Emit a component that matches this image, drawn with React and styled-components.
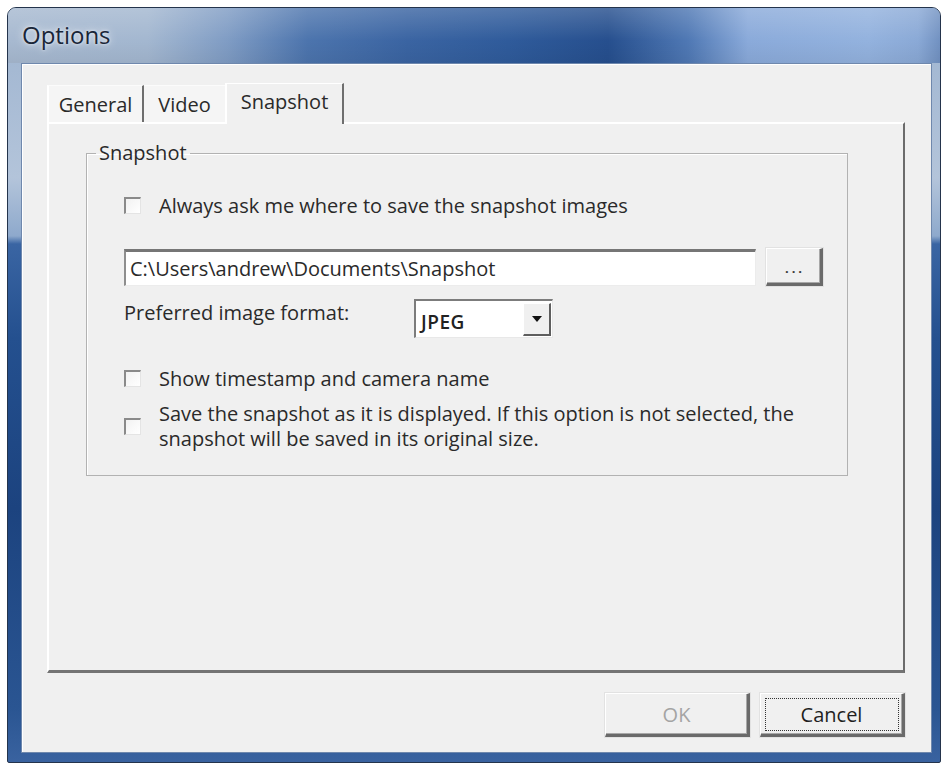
import React from "react";
import styled, { createGlobalStyle } from "styled-components";

const Global = createGlobalStyle`
  html, body { margin: 0; padding: 0; background: #ffffff; }
  body { font-family: "Open Sans", "Noto Sans", sans-serif; }
  * { box-sizing: border-box; }
`;

const Window = styled.div`
  margin: 7px 0 0 7px;
  width: 934px;
  height: 756px;
  display: flex;
  flex-direction: column;
  border: 1px solid #24344c;
  border-radius: 9px 9px 2px 2px;
  overflow: hidden;
  background: linear-gradient(
    180deg,
    #9db3cf 0px,
    #b3c4da 170px,
    #8ea9cc 228px,
    #3a65a3 236px,
    #24508f 330px,
    #1c437f 500px,
    #2a5592 700px,
    #3a63a0 756px
  );
`;

const TitleBar = styled.div`
  height: 55px;
  flex: none;
  display: flex;
  align-items: center;
  padding-left: 14px;
  background:
    linear-gradient(180deg, rgba(255,255,255,0.18) 0%, rgba(255,255,255,0) 60%, rgba(0,0,0,0.05) 100%),
    linear-gradient(
      90deg,
      #a7b9d0 0px,
      #a3b7d0 140px,
      #7f9cc4 220px,
      #4c74ad 300px,
      #3a64a2 400px,
      #2f5b9b 500px,
      #264f8e 600px,
      #4f78b4 680px,
      #8aaada 740px,
      #93b2de 860px,
      #8aa9d6 910px,
      #6f8fbf 934px
    );
`;

const Title = styled.span`
  font-family: "Open Sans", "Noto Sans", sans-serif;
  font-size: 24px;
  color: #1a2638;
  text-shadow: 0 0 8px rgba(255, 255, 255, 0.9), 0 0 3px rgba(255, 255, 255, 0.7);
  margin-top: -2px;
`;

const FrameBody = styled.div`
  flex: 1;
  display: flex;
  padding: 0 8px 9px 13px;
`;

const Client = styled.div`
  flex: 1;
  display: flex;
  flex-direction: column;
  background: #f0f0f0;
  border: 1px solid #6f88ad;
  box-shadow: inset 1px 1px 0 #ffffff;
  padding: 21px 26px 14px 25px;
`;

const TabStrip = styled.div`
  display: flex;
  align-items: flex-end;
  height: 39px;
  position: relative;
  z-index: 1;
  margin-bottom: -2px;
`;

const Tab = styled.div`
  height: ${(p) => (p.$active ? "41px" : "37px")};
  margin-bottom: ${(p) => (p.$active ? "0" : "2px")};
  width: ${(p) => p.$w}px;
  display: flex;
  align-items: center;
  justify-content: center;
  font-size: 20px;
  color: #2a2a2a;
  background: ${(p) => (p.$active ? "#f0f0f0" : "#f5f5f5")};
  border-top: 1px solid ${(p) => (p.$active ? "#ffffff" : "#fbfbfb")};
  border-left: ${(p) => (p.$first || p.$active ? "2px solid #ffffff" : "0")};
  border-right: ${(p) => (p.$sep ? "2px solid #6e6e6e" : "0")};
  padding-bottom: ${(p) => (p.$active ? "5px" : "0")};
`;

const Panel = styled.div`
  flex: none;
  height: 551px;
  background: #f0f0f0;
  border-top: 2px solid #ffffff;
  border-left: 2px solid #ffffff;
  border-right: 2px solid #6c6c6c;
  border-bottom: 3px solid #747474;
  padding: 19px 55px 0 37px;
`;

const Group = styled.fieldset`
  margin: 0;
  border: 1px solid #b2b2b2;
  box-shadow: 1px 1px 0 #ffffff inset;
  padding: 30px 24px 24px 9px;
`;

const GroupBody = styled.div`
  display: flex;
  flex-direction: column;
  padding-left: 28px;
`;

const Legend = styled.legend`
  font-size: 20px;
  line-height: 20px;
  color: #2a2a2a;
  padding: 0 3px;
  margin: 0;
`;

const CheckRow = styled.div`
  display: flex;
  align-items: center;
  gap: 18px;
  margin-top: ${(p) => p.$mt || 0}px;
`;

const Box = styled.span`
  flex: none;
  width: 17px;
  height: 17px;
  border-top: 2px solid #8a8a8a;
  border-left: 2px solid #8a8a8a;
  border-right: 1px solid #e4e4e4;
  border-bottom: 1px solid #e4e4e4;
  background: linear-gradient(135deg, #f2f2f2, #ffffff);
`;

const Label = styled.span`
  font-size: 20px;
  line-height: 25px;
  color: #2a2a2a;
`;

const PathRow = styled.div`
  display: flex;
  align-items: center;
  gap: 10px;
  margin-top: 30px;
`;

const PathInput = styled.div`
  flex: 1;
  height: 37px;
  background: #ffffff;
  border-top: 3px solid #767676;
  border-left: 2px solid #8e8e8e;
  border-right: 1px solid #ececec;
  border-bottom: 1px solid #ececec;
  display: flex;
  align-items: center;
  padding-left: 4px;
  font-size: 20px;
  color: #2a2a2a;
`;

const RaisedButton = styled.div`
  width: ${(p) => p.$w}px;
  height: ${(p) => p.$h}px;
  flex: none;
  display: flex;
  align-items: center;
  justify-content: center;
  background: #f0f0f0;
  border-top: 1px solid #ffffff;
  border-left: 1px solid #ffffff;
  border-right: 3px solid #6a6a6a;
  border-bottom: 3px solid #6a6a6a;
  box-shadow: inset -1px -1px 0 #a8a8a8, 0 0 0 1px #e2e2e2;
  color: ${(p) => (p.$disabled ? "#a4a4a4" : "#1f1f1f")};
  font-size: 20px;
  position: relative;
`;

const Dots = styled.span`
  font-size: 13px;
  font-weight: 700;
  letter-spacing: 3px;
  margin: 4px 0 0 3px;
  color: #3a3a3a;
`;

const FormatRow = styled.div`
  display: flex;
  align-items: flex-start;
  margin-top: 13px;
`;

const FormatLabel = styled.span`
  font-size: 20px;
  line-height: 25px;
  color: #2a2a2a;
  width: 290px;
  margin-top: 1px;
`;

const Select = styled.div`
  width: 139px;
  height: 39px;
  display: flex;
  align-items: center;
  background: #ffffff;
  border-top: 2px solid #7c7c7c;
  border-left: 2px solid #7c7c7c;
  border-right: 1px solid #e8e8e8;
  border-bottom: 1px solid #e8e8e8;
  padding: 1px 1px 1px 5px;
`;

const SelectText = styled.span`
  flex: 1;
  font-size: 19px;
  font-weight: 600;
  letter-spacing: 0.5px;
  color: #222;
  margin-top: 5px;
`;

const DropButton = styled.div`
  width: 28px;
  height: 33px;
  display: flex;
  align-items: center;
  justify-content: center;
  background: #f0f0f0;
  border-top: 1px solid #ffffff;
  border-left: 1px solid #ffffff;
  border-right: 2px solid #5e5e5e;
  border-bottom: 2px solid #5e5e5e;
`;

const SaveRow = styled.div`
  display: flex;
  align-items: center;
  gap: 18px;
  margin-top: 10px;
`;

const ButtonRow = styled.div`
  display: flex;
  justify-content: flex-end;
  gap: 10px;
  margin-top: 20px;
`;

const Focus = styled.span`
  position: absolute;
  inset: 4px 3px 3px 4px;
  border: 1px dotted #333;
  pointer-events: none;
`;

export default function App() {
  return (
    <>
      <Global />
      <Window>
        <TitleBar>
          <Title>Options</Title>
        </TitleBar>
        <FrameBody>
          <Client>
            <TabStrip>
              <Tab $w={97} $first $sep>General</Tab>
              <Tab $w={81}>Video</Tab>
              <Tab $w={119} $active $sep>Snapshot</Tab>
            </TabStrip>
            <Panel>
              <Group>
                <Legend>Snapshot</Legend>
                <GroupBody>
                  <CheckRow>
                    <Box />
                    <Label>Always ask me where to save the snapshot images</Label>
                  </CheckRow>
                  <PathRow>
                    <PathInput>C:\Users\andrew\Documents\Snapshot</PathInput>
                    <RaisedButton $w={57} $h={38}>
                      <Dots>...</Dots>
                    </RaisedButton>
                  </PathRow>
                  <FormatRow>
                    <FormatLabel>Preferred image format:</FormatLabel>
                    <Select>
                      <SelectText>JPEG</SelectText>
                      <DropButton>
                        <svg width="10" height="6" viewBox="0 0 10 6">
                          <path d="M0 0 H10 L5 6 Z" fill="#111" />
                        </svg>
                      </DropButton>
                    </Select>
                  </FormatRow>
                  <CheckRow $mt={28}>
                    <Box />
                    <Label>Show timestamp and camera name</Label>
                  </CheckRow>
                  <SaveRow>
                    <Box />
                    <Label>
                      Save the snapshot as it is displayed. If this option is not selected, the
                      <br />
                      snapshot will be saved in its original size.
                    </Label>
                  </SaveRow>
                </GroupBody>
              </Group>
            </Panel>
            <ButtonRow>
              <RaisedButton $w={145} $h={44} $disabled>OK</RaisedButton>
              <RaisedButton $w={145} $h={44}>
                Cancel
                <Focus />
              </RaisedButton>
            </ButtonRow>
          </Client>
        </FrameBody>
      </Window>
    </>
  );
}
